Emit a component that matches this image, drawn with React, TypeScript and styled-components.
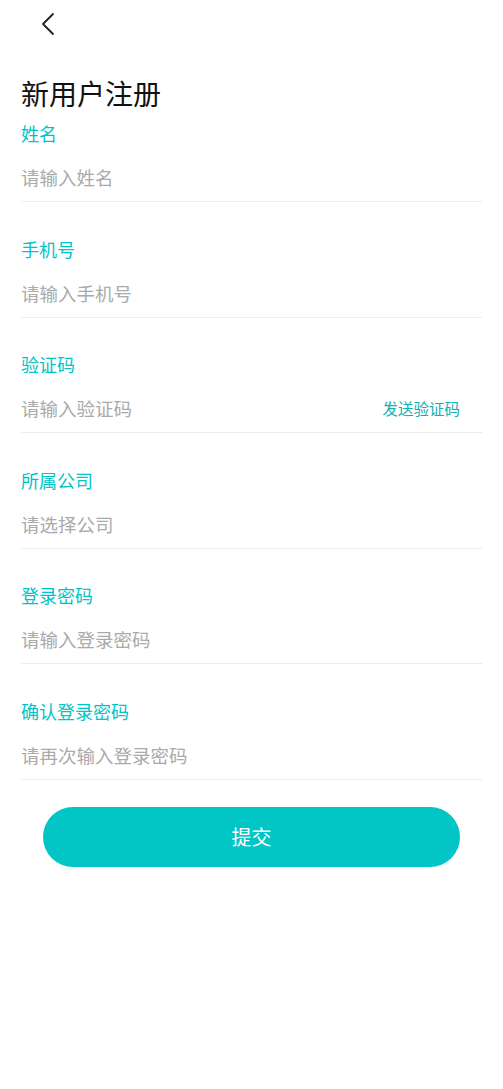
import React from 'react';
import styled, { createGlobalStyle } from 'styled-components';

const GlobalStyle = createGlobalStyle`
  html, body {
    margin: 0;
    padding: 0;
    background: #ffffff;
  }
  body {
    font-family: "Noto Sans CJK SC", "Noto Sans", sans-serif;
  }
`;

const fields = [
  { label: '姓名', placeholder: '请输入姓名' },
  { label: '手机号', placeholder: '请输入手机号' },
  { label: '验证码', placeholder: '请输入验证码', action: '发送验证码' },
  { label: '所属公司', placeholder: '请选择公司' },
  { label: '登录密码', placeholder: '请输入登录密码' },
  { label: '确认登录密码', placeholder: '请再次输入登录密码' },
];

export default function App() {
  return (
    <Page>
      <GlobalStyle />
      <TopBar>
        <BackButton aria-label='back'>
          <svg width='14' height='24' viewBox='0 0 14 24' fill='none'>
            <path d='M12 2 L2 12 L12 22' stroke='#222' strokeWidth='1.8' strokeLinecap='round' strokeLinejoin='round' />
          </svg>
        </BackButton>
      </TopBar>
      <Title>新用户注册</Title>
      <Form>
        {fields.map((f) => (
          <Field key={f.label}>
            <Label>{f.label}</Label>
            <InputRow>
              <Input placeholder={f.placeholder} />
              {f.action && <SendCode>{f.action}</SendCode>}
            </InputRow>
          </Field>
        ))}
      </Form>
      <ButtonWrap>
        <Submit>提交</Submit>
      </ButtonWrap>
    </Page>
  );
}

const Page = styled.div`
  width: 503px;
  min-height: 1089px;
  background: #fff;
  padding: 0 21px;
  box-sizing: border-box;
`;

const TopBar = styled.div`
  height: 48px;
  display: flex;
  align-items: center;
`;

const BackButton = styled.div`
  width: 14px;
  height: 24px;
  margin-left: 20px;
  margin-top: -1px;
  display: flex;
`;

const Title = styled.h1`
  margin: 28px 0 0;
  font-size: 28px;
  font-weight: 400;
  line-height: 34px;
  color: #111;
`;

const Form = styled.div`
  display: flex;
  flex-direction: column;
  gap: 33.6px;
  margin-top: 10px;
`;

const Field = styled.div`
  display: flex;
  flex-direction: column;
`;

const Label = styled.div`
  font-size: 18px;
  line-height: 26px;
  color: #00c4c6;
`;

const InputRow = styled.div`
  display: flex;
  align-items: center;
  padding: 18px 0 11px;
  border-bottom: 1px solid #ececec;
`;

const Input = styled.input`
  flex: 1;
  min-width: 0;
  height: 26px;
  border: none;
  outline: none;
  padding: 0;
  font-family: "Noto Sans CJK SC", "Noto Sans", sans-serif;
  font-size: 18.5px;
  color: #333;
  background: transparent;
  &::placeholder {
    color: #aaaaaa;
  }
`;

const SendCode = styled.span`
  font-size: 15.5px;
  line-height: 26px;
  color: #12aeb0;
  margin-right: 22px;
`;

const ButtonWrap = styled.div`
  padding: 27px 22px 0;
`;

const Submit = styled.button`
  width: 100%;
  height: 60px;
  border: none;
  border-radius: 30px;
  background: #02c5c5;
  color: #fff;
  font-family: "Noto Sans CJK SC", "Noto Sans", sans-serif;
  font-size: 20px;
`;
